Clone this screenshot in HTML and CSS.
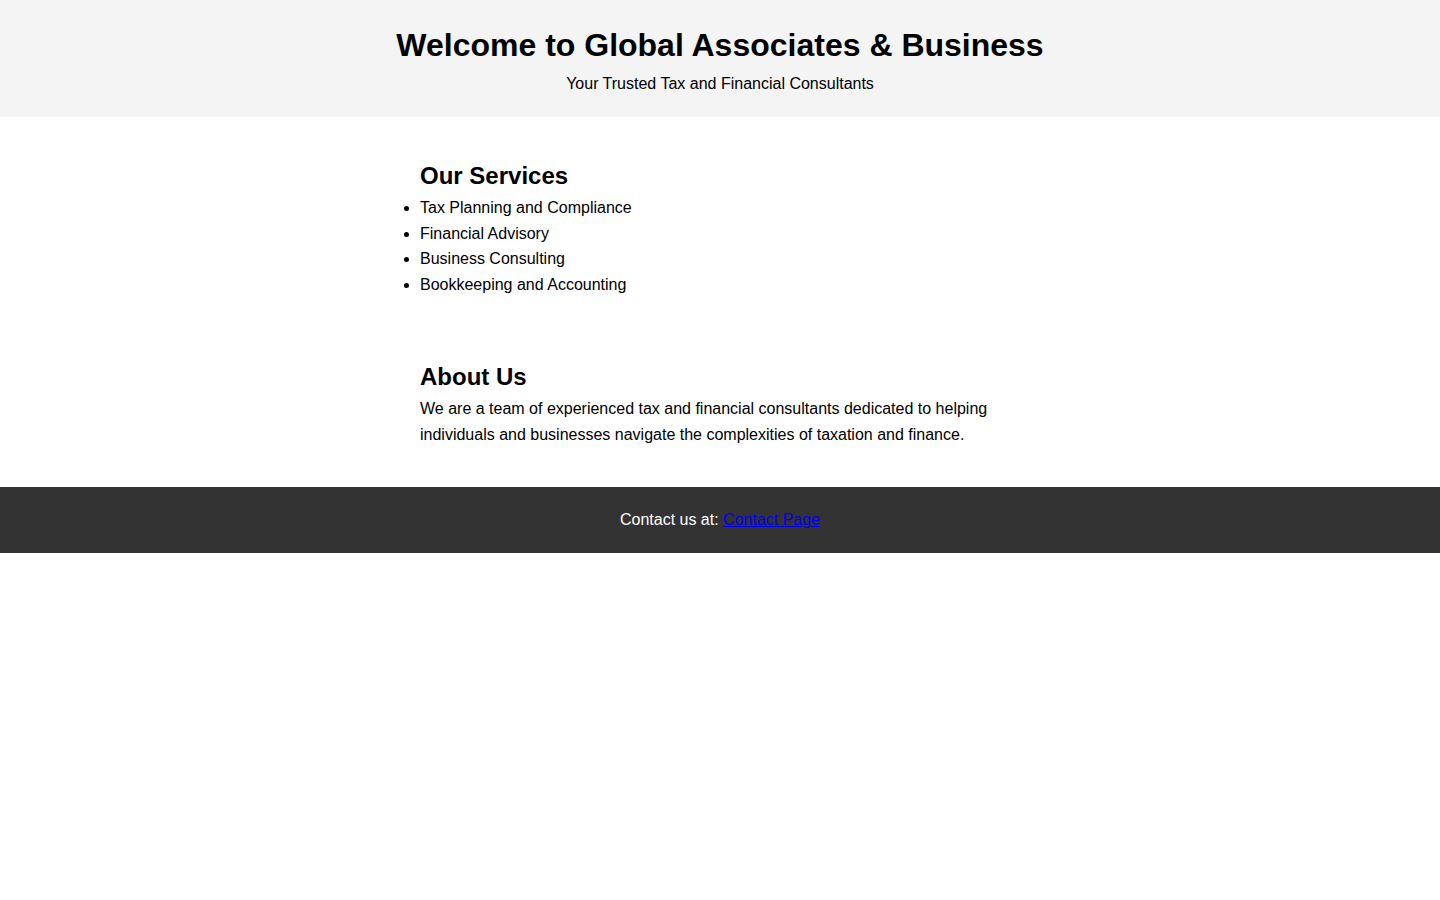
FILE: index.html
```html
<!DOCTYPE html>
<html lang="en">
<head>
<meta charset="utf-8">
<title>Global Associates &amp; Business</title>
<link rel="stylesheet" href="styles.css">
</head>
<body>
<header class="site-header">
  <h1 class="site-title">Welcome to Global Associates &amp; Business</h1>
  <p class="tagline">Your Trusted Tax and Financial Consultants</p>
</header>
<main class="content">
  <section class="section">
    <h2 class="section-title">Our Services</h2>
    <ul class="services">
      <li>Tax Planning and Compliance</li>
      <li>Financial Advisory</li>
      <li>Business Consulting</li>
      <li>Bookkeeping and Accounting</li>
    </ul>
  </section>
  <section class="section">
    <h2 class="section-title">About Us</h2>
    <p class="text">We are a team of experienced tax and financial consultants dedicated to helping individuals and businesses navigate the complexities of taxation and finance.</p>
  </section>
</main>
<footer class="site-footer">
  <p class="text">Contact us at: <a href="#" class="contact-link">Contact Page</a></p>
</footer>
</body>
</html>
```
FILE: styles.css
```css
html, body {
  margin: 0;
  padding: 0;
}
body {
  font-family: "Liberation Sans", Arial, sans-serif;
  font-size: 16px;
  line-height: 1.6;
  color: #000;
  background: #fff;
}
.site-header {
  background: #f4f4f4;
  padding: 20px;
  text-align: center;
}
.site-title {
  margin: 0;
  font-size: 32px;
  font-weight: bold;
}
.tagline {
  margin: 0;
}
.content {
  max-width: 600px;
  margin: 0 auto;
  padding: 20px 0;
}
.section {
  padding: 20px 0;
}
.section + .section {
  margin-top: 20px;
}
.section-title {
  margin: 0;
  font-size: 24px;
  font-weight: bold;
}
.services {
  margin: 0;
  padding: 0;
}
.text {
  margin: 0;
}
.site-footer {
  background: #333;
  color: #fff;
  text-align: center;
  padding: 20px;
}
.contact-link {
  color: #0000ee;
}
```
